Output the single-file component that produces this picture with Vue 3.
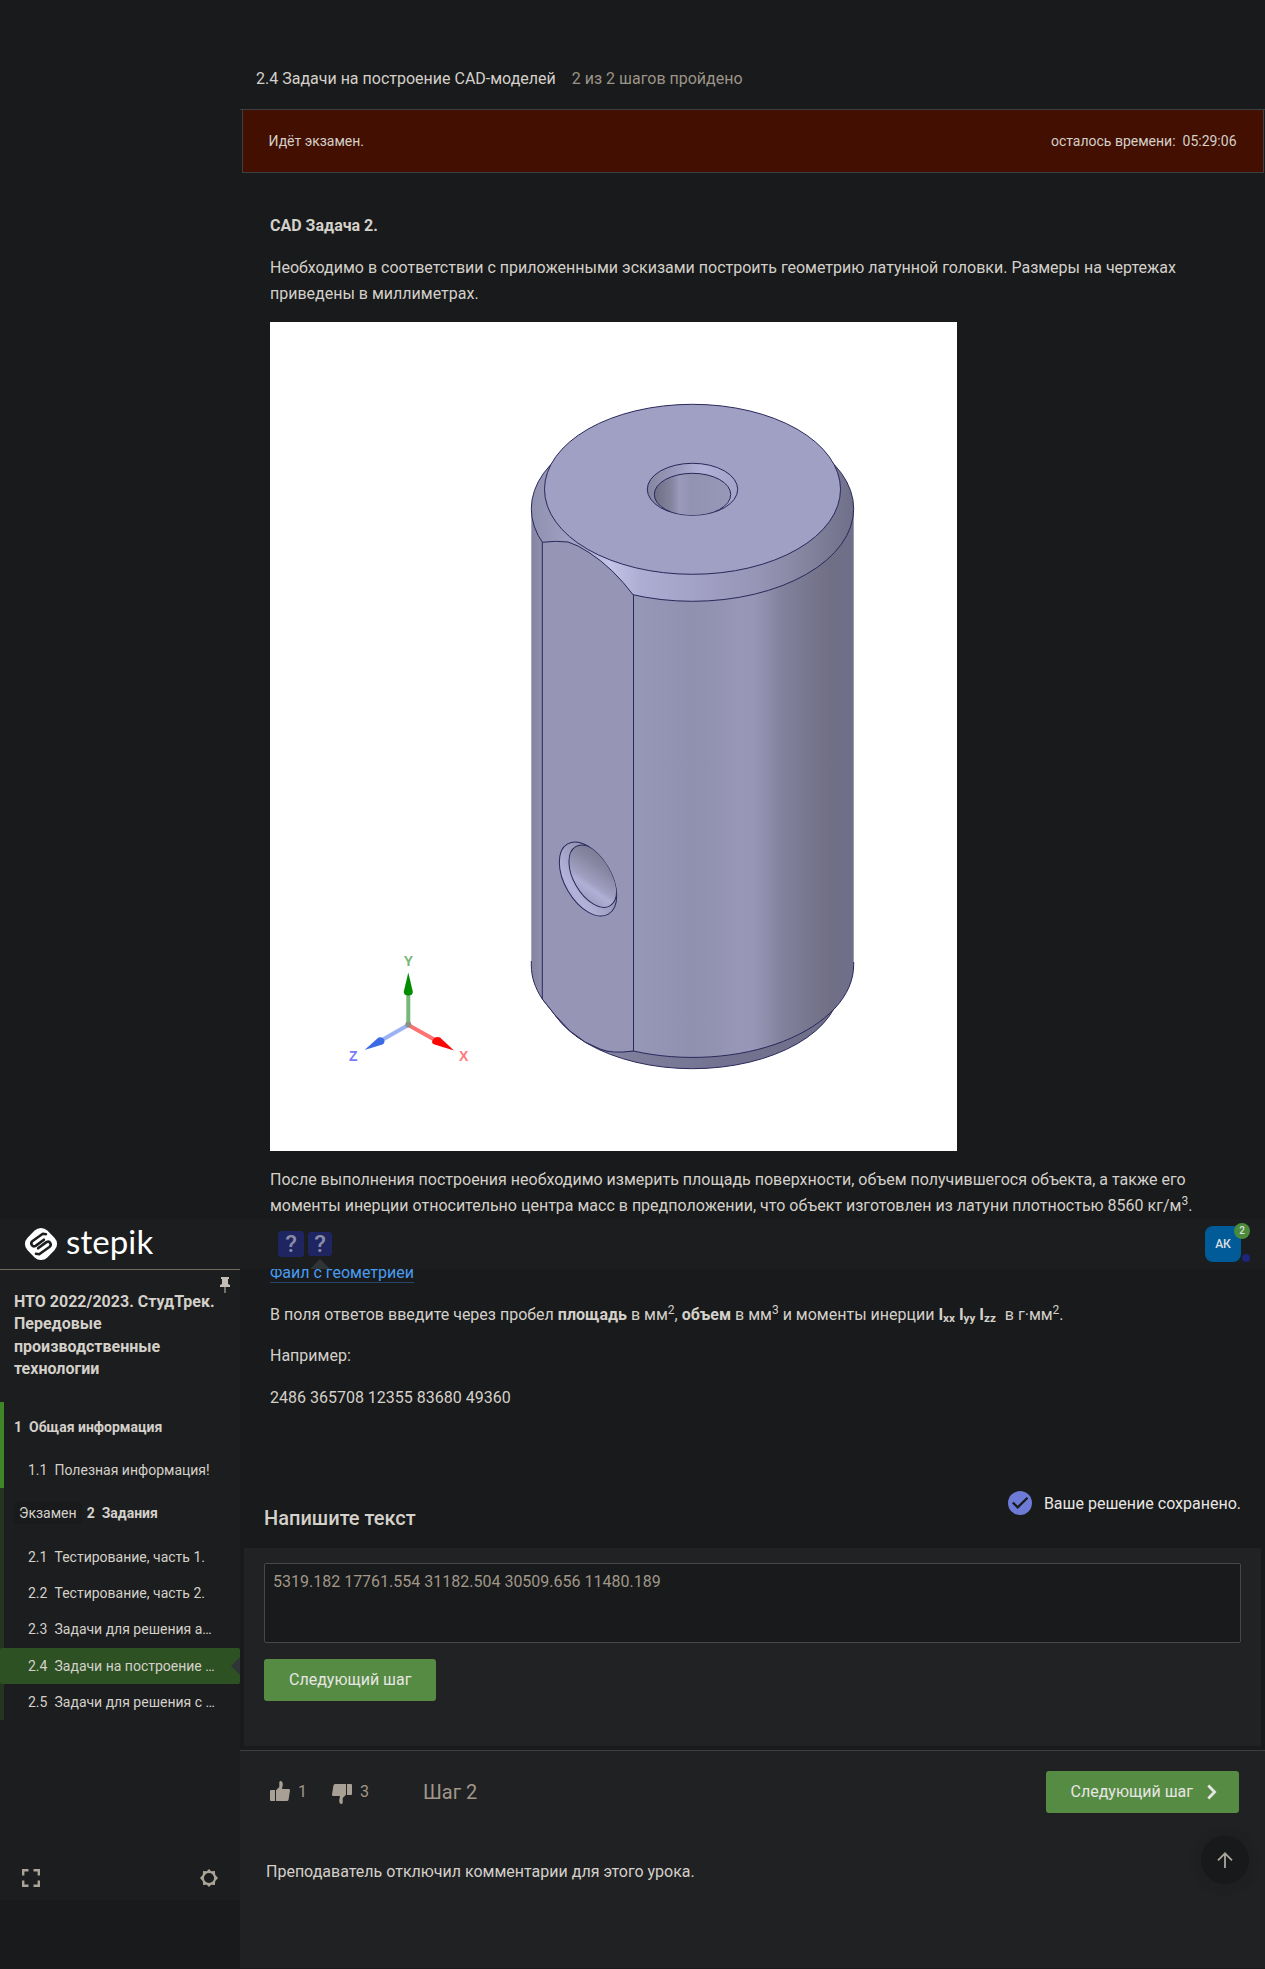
<script setup>
const sections = [
  {
    number: '1',
    title: 'Общая информация',
    exam: false,
    done: true,
    lessons: [{ number: '1.1', title: 'Полезная информация!' }]
  },
  {
    number: '2',
    title: 'Задания',
    exam: true,
    done: false,
    lessons: [
      { number: '2.1', title: 'Тестирование, часть 1.' },
      { number: '2.2', title: 'Тестирование, часть 2.' },
      { number: '2.3', title: 'Задачи для решения а…' },
      { number: '2.4', title: 'Задачи на построение …', active: true },
      { number: '2.5', title: 'Задачи для решения с …' }
    ]
  }
]
</script>

<template>
  <div class="page">
    <aside class="sidebar">
      <div class="sidebar-inner">
        <div class="brand">
          <svg class="brand-mark" viewBox="0 0 32 32" width="32" height="32">
            <rect x="2" y="2" width="28" height="28" rx="9" transform="rotate(45 16 16)" fill="#fff" />
            <g fill="none" stroke="#1b1d1e" stroke-width="2.6" stroke-linecap="round" stroke-linejoin="round">
              <path d="M21 6.200 17.800 5.800 7.600 13C4.800 15.300 7 19.700 10.600 17.900L18.900 11.700" />
              <path d="M11 25.800 14.200 26.200 24.400 19C27.200 16.700 25 12.300 21.400 14.100L13.100 20.300" />
            </g>
          </svg>
          <span class="brand-name">stepik</span>
        </div>

        <div class="course">
          <h2>НТО 2022/2023. СтудТрек. Передовые производственные технологии</h2>
          <svg class="pin" viewBox="0 0 10 16" width="10" height="16">
            <path d="M1 0h8v2H8v5l2 1v2H0V8l2-1V2H1z" fill="#c4bfb6" />
            <path d="M4.2 10h1.6v6H4.2z" fill="#8a857d" />
          </svg>
        </div>

        <nav>
          <section v-for="s in sections" :key="s.number" class="section" :class="{ done: s.done }">
            <div class="section-title">
              <span v-if="s.exam" class="exam-tag">Экзамен</span>
              <b class="num">{{ s.number }}</b><b>{{ s.title }}</b>
            </div>
            <div class="lessons">
              <div v-for="l in s.lessons" :key="l.number" class="lesson" :class="{ active: l.active }">
                <span class="lesson-num">{{ l.number }}</span><span>{{ l.title }}</span>
              </div>
            </div>
          </section>
        </nav>

        <div class="tools">
          <svg viewBox="0 0 18 18" width="18" height="18" fill="none" stroke="#aaa498" stroke-width="2.4">
            <path d="M1.2 6.5V1.2h5.3M11.5 1.2h5.3v5.3M16.8 11.5v5.3h-5.3M6.5 16.8H1.2v-5.3" />
          </svg>
          <svg viewBox="0 0 18 18" width="18" height="18" fill="#aaa498">
            <path fill-rule="evenodd" d="M9 0 11.2 2.2 14.9 1.9 15.2 5.8 18 9 15.2 12.2 14.9 16.1 11.2 15.8 9 18 6.8 15.8 3.1 16.1 2.8 12.2 0 9 2.8 5.8 3.1 1.9 6.8 2.2zM9 3.9A5.1 5.1 0 1 0 9 14.1 5.1 5.1 0 1 0 9 3.9z" />
          </svg>
        </div>
      </div>
    </aside>

    <main class="main">
      <header class="lesson-head">
        <span>2.4 Задачи на построение CAD-моделей</span>
        <span class="progress">2 из 2 шагов пройдено</span>
      </header>

      <div class="exam-line">
        <div class="exam">
          <span>Идёт экзамен.</span>
          <span>осталось времени:&nbsp; 05:29:06</span>
        </div>
      </div>

      <article class="article">
        <p><b>CAD Задача 2.</b></p>
        <p>Необходимо в соответствии с приложенными эскизами построить геометрию латунной головки. Размеры на чертежах приведены в миллиметрах.</p>

        <svg class="figure" viewBox="270 322 687 829" width="687" height="829">
          <defs>
            <linearGradient id="body" gradientUnits="userSpaceOnUse" x1="531" y1="0" x2="854" y2="0">
              <stop offset="0" stop-color="#8484a1" />
              <stop offset=".035" stop-color="#9090af" />
              <stop offset=".32" stop-color="#9797b8" />
              <stop offset=".5" stop-color="#9090af" />
              <stop offset=".57" stop-color="#9292b1" />
              <stop offset=".64" stop-color="#9997b8" />
              <stop offset=".69" stop-color="#9896b6" />
              <stop offset=".78" stop-color="#82819c" />
              <stop offset=".9" stop-color="#737289" />
              <stop offset=".93" stop-color="#706f86" />
              <stop offset="1" stop-color="#706f8b" />
            </linearGradient>
            <linearGradient id="chamfer" gradientUnits="userSpaceOnUse" x1="531" y1="0" x2="854" y2="0">
              <stop offset="0" stop-color="#8f8fae" />
              <stop offset=".15" stop-color="#a5a4c8" />
              <stop offset=".24" stop-color="#c4c3e8" />
              <stop offset=".34" stop-color="#adacd2" />
              <stop offset=".5" stop-color="#a3a2c7" />
              <stop offset=".7" stop-color="#9695b6" />
              <stop offset=".85" stop-color="#85849f" />
              <stop offset="1" stop-color="#706f89" />
            </linearGradient>
            <linearGradient id="bottom" gradientUnits="userSpaceOnUse" x1="600" y1="0" x2="840" y2="0">
              <stop offset="0" stop-color="#83829f" />
              <stop offset=".5" stop-color="#737290" />
              <stop offset="1" stop-color="#706f89" />
            </linearGradient>
            <linearGradient id="bore" x1="0" y1="0" x2="1" y2="0">
              <stop offset="0" stop-color="#6f6e86" />
              <stop offset=".22" stop-color="#85849e" />
              <stop offset=".33" stop-color="#9c9abb" />
              <stop offset=".48" stop-color="#9292b1" />
              <stop offset="1" stop-color="#9897b8" />
            </linearGradient>
            <linearGradient id="rim" x1="0" y1="0" x2="1" y2="0">
              <stop offset="0" stop-color="#86859f" />
              <stop offset=".35" stop-color="#9e9dc0" />
              <stop offset=".6" stop-color="#b1b0d8" />
              <stop offset="1" stop-color="#a3a2c7" />
            </linearGradient>
            <linearGradient id="sideRim" gradientUnits="userSpaceOnUse" x1="585" y1="842" x2="590" y2="916">
              <stop offset="0" stop-color="#77768e" />
              <stop offset=".35" stop-color="#9695b5" />
              <stop offset=".75" stop-color="#b3b2da" />
              <stop offset="1" stop-color="#a5a4c9" />
            </linearGradient>
            <linearGradient id="sideBore" gradientUnits="userSpaceOnUse" x1="578" y1="847" x2="606" y2="906">
              <stop offset="0" stop-color="#73728a" />
              <stop offset=".35" stop-color="#8a89a5" />
              <stop offset=".58" stop-color="#9f9ec0" />
              <stop offset=".68" stop-color="#b0afd6" />
              <stop offset=".85" stop-color="#a09fc2" />
              <stop offset="1" stop-color="#9897b8" />
            </linearGradient>
            <clipPath id="sideClip">
              <ellipse cx="588" cy="879" rx="40.6" ry="23.3" transform="rotate(59.8 588 879)" />
            </clipPath>
            <clipPath id="topClip"><ellipse cx="692.5" cy="489.3" rx="45.2" ry="26" /></clipPath>
          </defs>
          <rect x="270" y="322" width="687" height="829" fill="#fff" />

          <g stroke="#29285a" stroke-width="1" stroke-linejoin="round">
            <ellipse cx="692.5" cy="983.7" rx="148" ry="85" fill="url(#bottom)" />
            <path d="M531.3 508.7V964.7C531.3 977 535 988 542.3 999L555 1015 570 1031 585 1042 600 1049Q610 1053 633.5 1051A161.2 92.6 0 0 0 853.7 964.7V508.7z" fill="url(#body)" stroke="none" />
            <path d="M531.3 961V965C531.3 977 535 988 542.3 999L555 1015 570 1031 585 1042 600 1049Q610 1053 633.5 1051A161.2 92.6 0 0 0 853.7 964.7V962" fill="none" />
            <ellipse cx="692.5" cy="508.7" rx="161.2" ry="92.6" fill="url(#chamfer)" />
            <path d="M542.3 542.3Q556 540.5 568 542 578 545 589 552.5 613 568 633.5 595.3V1051Q612 1054 600 1049L585 1042 570 1031 555 1015 542.3 999z" fill="#9695b6" />
            <ellipse cx="692.5" cy="489.3" rx="148" ry="85" fill="#a09fc4" />
            <ellipse cx="692.5" cy="489.3" rx="45.2" ry="26" fill="url(#rim)" />
            <ellipse cx="692.5" cy="494.5" rx="38.2" ry="21.2" fill="url(#bore)" clip-path="url(#topClip)" />
            <ellipse cx="588" cy="879" rx="40.6" ry="23.3" transform="rotate(59.8 588 879)" fill="url(#sideRim)" />
            <g clip-path="url(#sideClip)">
              <ellipse cx="592.8" cy="876.2" rx="34.2" ry="19.2" transform="rotate(60 592.8 876.2)" fill="url(#sideBore)" />
            </g>
          </g>

          <g stroke-width="4">
            <path d="M408.3 1025V992" stroke="#76b876" />
            <path d="M408.3 1025 382 1040" stroke="#9db2f5" />
            <path d="M408.3 1025 436 1040.500" stroke="#ff7272" />
          </g>
          <circle cx="408.3" cy="1024.500" r="3" fill="#8c9183" />
          <path d="M408.300 972.500 412.900 992Q412.500 995.500 408.300 995.500T403.700 992z" fill="#008c00" />
          <path d="M364.500 1050 378.500 1037.500Q382.500 1036.500 384 1039.500T382.500 1044.500z" fill="#3c6be8" />
          <path d="M454 1050.500 440 1037.500Q435.500 1036 433 1039.500T434.500 1044.500z" fill="#fb0505" />
          <g font-family="Liberation Sans, sans-serif" font-weight="700" font-size="14" text-anchor="middle">
            <text x="408.3" y="966" fill="#76b876">Y</text>
            <text x="353.3" y="1061" fill="#7a7aff">Z</text>
            <text x="463.7" y="1061" fill="#ff7a7a">X</text>
          </g>
        </svg>

        <p>После выполнения построения необходимо измерить площадь поверхности, объем получившегося объекта, а также его моменты инерции относительно центра масс в предположении, что объект изготовлен из латуни плотностью 8560 кг/м<sup>3</sup>.</p>
        <p><br /><a class="file">Файл с геометрией</a></p>
        <p>В поля ответов введите через пробел <b>площадь</b> в мм<sup>2</sup>, <b>объем</b> в мм<sup>3</sup> и моменты инерции <b class="moments">I<sub>xx</sub> I<sub>yy</sub> I<sub>zz</sub></b>&nbsp; в г·мм<sup>2</sup>.</p>
        <p>Например:</p>
        <p>2486 365708 12355 83680 49360</p>
      </article>

      <div class="answer-head">
        <h3>Напишите текст</h3>
        <div class="status">
          <svg viewBox="0 0 24 24" width="24" height="24">
            <circle cx="12" cy="12" r="12" fill="#6e7bd6" />
            <path d="M4.800 11.500 9.700 16.300 19.500 6.700" fill="none" stroke="#181a1b" stroke-width="2.300" />
          </svg>
          <span>Ваше решение сохранено.</span>
        </div>
      </div>

      <div class="answer">
        <div class="field">5319.182 17761.554 31182.504 30509.656 11480.189</div>
        <button class="btn">Следующий шаг</button>
      </div>

      <footer class="footer">
        <div class="foot-row">
          <span class="vote">
            <svg viewBox="0 0 20 20" width="20" height="20" fill="#a8a095">
              <path d="M0 9.500 1 9h4v11H1l-1-.6zM6 9.300 9.300 6V1.300Q9.500 0 10.700 0 12.600 0 12.800 3.500L12 8h6.800q1.300 0 1.200 1.500L18.600 18.500Q18.200 20 17 20H6z" />
            </svg>1
          </span>
          <span class="vote down">
            <svg viewBox="0 0 20 20" width="20" height="20" fill="#a8a095">
              <path d="M20 10.500 19 11h-4V0h4l1 .6zM14 10.700 10.700 14v4.700Q10.500 20 9.300 20 7.400 20 7.200 16.500L8 12H1.200Q-.1 12 0 10.500L1.400 1.500Q1.800 0 3 0h11z" />
            </svg>3
          </span>
          <span class="step">Шаг 2</span>
          <button class="btn next">
            Следующий шаг
            <svg viewBox="0 0 10 16" width="10" height="16" fill="none" stroke="#e8e6e3" stroke-width="2.800">
              <path d="M1.300 1.500 7.600 8 1.300 14.500" />
            </svg>
          </button>
        </div>
        <p class="comments">Преподаватель отключил комментарии для этого урока.</p>
        <div class="to-top">
          <svg viewBox="0 0 16 16" width="16" height="16" fill="none" stroke="#aaa69f" stroke-width="1.800">
            <path d="M8 16V1.500M1 8.300 8 1.300 15 8.300" />
          </svg>
        </div>
      </footer>

      <!-- Sticky toolbar floating over the lesson text -->
      <div class="topbar">
        <div class="steps">
          <span class="quiz">?</span>
          <span class="quiz current">?</span>
        </div>
        <div class="avatar">АК<i class="badge">2</i><i class="dot"></i></div>
      </div>
    </main>
  </div>
</template>

<style>
body { background: #181a1b; }
</style>

<style scoped>
* { box-sizing: border-box; }
.page {
  display: flex;
  width: 1265px;
  height: 1969px;
  overflow: hidden;
  background: #181a1b;
  color: #d4d0ca;
  font: 16px/24px Roboto, sans-serif;
}
b { font-weight: 700; }
p, h2, h3 { margin: 0; }
svg { display: block; flex: none; }

.sidebar { width: 240px; flex: none; padding-top: 1219px; }
.sidebar-inner { display: flex; flex-direction: column; height: 681px; background: #1b1d1e; }
.brand {
  display: flex;
  align-items: center;
  flex: none;
  height: 51px;
  padding-left: 25px;
  border-bottom: 1px solid #736b5e;
}
.brand-mark { overflow: visible; }
.brand-name {
  margin: -6px 0 0 9px;
  color: #fff;
  font: 400 33px/40px Lato, sans-serif;
  letter-spacing: .1px;
}
.course { display: flex; height: 132px; flex: none; padding: 21px 0 0 14px; }
.course h2 { width: 206px; font-size: 16px; line-height: 22.400px; font-weight: 700; }
.pin { margin: -14px 0 0; }

.section { border-left: 4px solid #24361f; font-size: 14px; line-height: 20px; }
.section.done { border-color: #3f8629; }
.section-title { display: flex; align-items: center; height: 43px; padding: 7px 0 0 10px; }
.num { margin-right: 7px; }
.exam-tag {
  margin-right: 5px;
  padding: 1px 5px;
  border-radius: 4px;
  background: #181a1b;
}
.lessons { padding-top: 7px; }
.lesson {
  position: relative;
  display: flex;
  align-items: center;
  height: 36.400px;
  padding-left: 24px;
  white-space: nowrap;
}
.lesson-num { width: 26.500px; }
.lesson.active { margin-left: -4px; padding-left: 28px; background: #2d5123; border-radius: 2px; }
.lesson.active::after {
  content: '';
  position: absolute;
  right: 0;
  top: 9px;
  border: 9px solid transparent;
  border-left: 0;
  border-right: 9px solid #2f3437;
}
.tools { display: flex; justify-content: space-between; margin-top: auto; padding: 0 22px 13px; }

.main { position: relative; width: 1025px; display: flex; flex-direction: column; }
.lesson-head { display: flex; gap: 16px; height: 109px; padding: 67px 16px 0; flex: none; }
.progress { color: #9c9488; }
.exam-line { border-top: 1px solid #3b4043; padding: 0 1px 0 2px; }
.exam {
  display: flex;
  justify-content: space-between;
  align-items: center;
  height: 63px;
  padding: 0 26.500px 0 25.500px;
  border: 1px solid #3b4043;
  border-top: 0;
  background: #430f00;
  font-size: 14px;
}
.article { height: 1318px; flex: none; padding: 40.400px 45px 0 30px; line-height: 25.600px; }
.article p { margin-bottom: 16px; }
.figure { margin-bottom: 16px; }
sup, sub { font-size: 75%; line-height: 0; position: relative; vertical-align: baseline; }
sup { top: -.5em; }
sub { bottom: -.25em; }
.moments { margin-right: 1px; }
.moments sub { font-size: 73%; }
.file { color: #4a9cf0; border-bottom: 1px solid #26456b; }

.answer-head { display: flex; justify-content: space-between; height: 57px; flex: none; padding: 0 24px; }
.answer-head h3 { padding-top: 13px; font-size: 20px; line-height: 28px; font-weight: 500; }
.status { display: flex; gap: 12px; height: 24px; color: #e8e6e3; }
.status span { padding-top: 1px; }
.answer { height: 198px; flex: none; margin: 0 4px; padding: 15px 20px; background: #212224; }
.field {
  height: 80px;
  margin-bottom: 16px;
  padding: 6px 8px;
  border: 1px solid #46494b;
  border-radius: 2px;
  background: #181a1b;
  color: #a09789;
}
.btn {
  display: flex;
  align-items: center;
  height: 42px;
  padding: 0 25px;
  border: 0;
  border-radius: 3px;
  background: #568b43;
  color: #e8e6e3;
  font: 16px/24px Roboto, sans-serif;
}
.footer {
  position: relative;
  flex: 1;
  margin-top: 4px;
  padding: 20px 26px 0;
  border-top: 1px solid #3d3f41;
  border-bottom: 1px solid #181a1b;
  background: #202123;
}
.foot-row { display: flex; align-items: center; padding-left: 4px; color: #a09789; }
.vote { display: flex; align-items: center; gap: 8px; width: 62px; }
.vote svg { margin-top: -2px; }
.vote.down svg { margin-top: 4px; }
.step { margin-left: 29px; font-size: 20px; }
.next { margin-left: auto; padding-right: 22px; gap: 14px; }
.comments { margin-top: 47px; }
.to-top {
  position: absolute;
  right: 16px;
  top: 85px;
  display: flex;
  align-items: center;
  justify-content: center;
  width: 48px;
  height: 48px;
  border-radius: 50%;
  background: #18191b;
  box-shadow: 0 1px 10px 4px rgba(20, 22, 23, .15);
}

.topbar {
  position: absolute;
  left: 0;
  right: 0;
  top: 1219px;
  display: flex;
  align-items: center;
  justify-content: space-between;
  height: 50px;
  padding: 0 24px 0 38px;
  background: #1b1d1e;
}
.steps { display: flex; align-items: center; gap: 4px; }
.quiz {
  position: relative;
  width: 26px;
  height: 26px;
  border-radius: 3px;
  background: #1e2560;
  color: #8a8ca6;
  font: 500 24px/26px Roboto, sans-serif;
  text-align: center;
}
.quiz.current { width: 24px; height: 24px; line-height: 24px; }
.current::after {
  content: '';
  position: absolute;
  left: 2px;
  top: 27px;
  border: 10px solid transparent;
  border-top: 0;
  border-bottom-color: #2f3437;
}
.avatar {
  position: relative;
  width: 36px;
  height: 36px;
  border-radius: 8px;
  background: #005b98;
  color: #dcdfe0;
  font: 500 12px/37px Roboto, sans-serif;
  text-align: center;
}
.badge {
  position: absolute;
  right: -9px;
  top: -3px;
  width: 16px;
  height: 16px;
  border-radius: 50%;
  background: #4b8a3b;
  font: 500 10px/16px Roboto, sans-serif;
}
.dot {
  position: absolute;
  right: -9px;
  bottom: 0;
  width: 8px;
  height: 8px;
  border-radius: 50%;
  background: #1d267a;
}
</style>
